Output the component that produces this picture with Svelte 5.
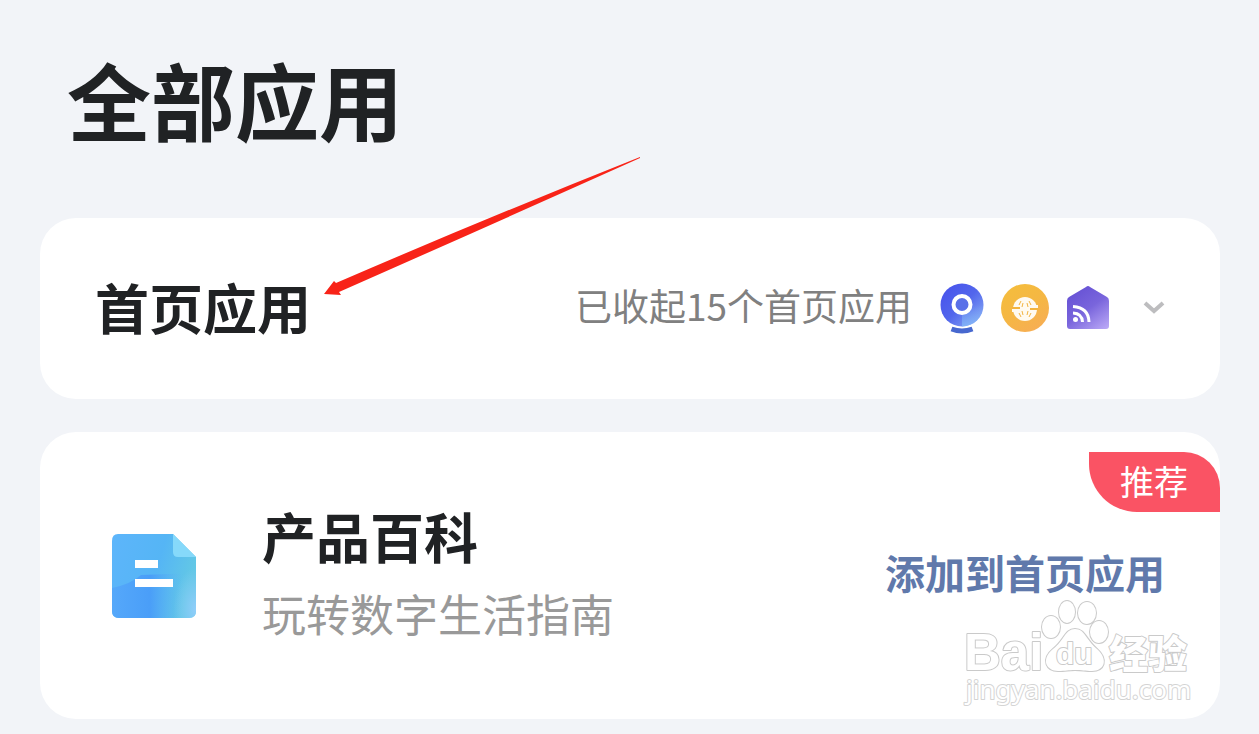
<script>
  let expanded = $state(false);
</script>

<main class="page">
  <h1>全部应用</h1>

  <section class="card home">
    <h2>首页应用</h2>
    <button class="summary" type="button" aria-expanded={expanded} onclick={() => (expanded = !expanded)}>
      <span class="count">已收起15个首页应用</span>
      <span class="icons">
        <svg width="44" height="52" viewBox="1 0 44 52" aria-hidden="true">
          <defs>
            <linearGradient id="cam" x1="0" y1="0" x2="1" y2="1">
              <stop offset="0" stop-color="#4650ec" />
              <stop offset="0.5" stop-color="#5266ec" />
              <stop offset="1" stop-color="#8fb4f6" />
            </linearGradient>
            <linearGradient id="camShade" x1="0" y1="0" x2="0" y2="1">
              <stop offset="0" stop-color="#82b4f8" stop-opacity="0" />
              <stop offset="1" stop-color="#82b8f8" stop-opacity="0.8" />
            </linearGradient>
          </defs>
          <circle cx="23" cy="23" r="21.5" fill="url(#cam)" />
          <path d="M23 23H44.500A21.500 21.500 0 0 1 23 44.500Z" fill="url(#camShade)" />
          <circle cx="23" cy="22.500" r="8.500" fill="#5a70e8" stroke="#fff" stroke-width="4" />
          <path d="M12.500 47Q23 51 33.500 47" fill="none" stroke="#4768cf" stroke-width="5" />
        </svg>
        <svg width="50" height="52" viewBox="0 0 50 52" aria-hidden="true">
          <defs>
            <linearGradient id="globe" x1="0.200" y1="0" x2="0.800" y2="1">
              <stop offset="0" stop-color="#f5bd3c" />
              <stop offset="0.500" stop-color="#f5b744" />
              <stop offset="1" stop-color="#f7ad55" />
            </linearGradient>
          </defs>
          <circle cx="25" cy="26" r="24" fill="url(#globe)" />
          <circle cx="25" cy="27" r="12" fill="#fffaf0" />
          <g fill="none" stroke="#f3b43f" stroke-width="2">
            <path d="M30 27H38M12 26H20" />
            <path d="M21 19L19 23M29 19L31 23M19 31L21 35M31 31L29 35" stroke-width="1" />
            <path d="M23 21L22 25M27 21L28 25M22 29L23 33M28 29L27 33" stroke-width="1" />
          </g>
          <path d="M32 23H38V26H32ZM12 27H18V30H12Z" fill="#fffaf0" />
        </svg>
        <svg width="44" height="52" viewBox="0 0 44 52" aria-hidden="true">
          <defs>
            <linearGradient id="house" x1="0.200" y1="0" x2="0.900" y2="1">
              <stop offset="0" stop-color="#6550d4" />
              <stop offset="0.500" stop-color="#7965dc" />
              <stop offset="1" stop-color="#b7a5f5" />
            </linearGradient>
          </defs>
          <path d="M20 5Q22 3 24 5L41 15Q43 16 43 19V44Q43 47 40 47H4Q1 47 1 44V19Q1 16 3 15Z" fill="url(#house)" />
          <circle cx="9.500" cy="37.500" r="2.500" fill="#fff" />
          <path d="M7 31Q16 31.500 16.500 40M7 24.500Q22.500 25.500 23 40" fill="none" stroke="#fff" stroke-width="3" />
        </svg>
      </span>
      <svg class="chevron" width="22" height="16" viewBox="0 0 22 16" aria-hidden="true">
        <path d="M2 4L11 12L20 4" fill="none" stroke="#bdbdbf" stroke-width="4" />
      </svg>
    </button>
  </section>

  <section class="card product">
    <span class="tag">推荐</span>
    <svg class="doc" width="86" height="86" viewBox="0 0 86 86" aria-hidden="true">
      <defs>
        <linearGradient id="doc" x1="0" y1="0" x2="1" y2="0.300">
          <stop offset="0" stop-color="#5db5fb" />
          <stop offset="0.600" stop-color="#55b5f5" />
          <stop offset="1" stop-color="#62c7e6" />
        </linearGradient>
        <linearGradient id="docBlue" x1="0" y1="0" x2="1" y2="0">
          <stop offset="0" stop-color="#55a8fa" />
          <stop offset="0.450" stop-color="#4a9ef8" />
          <stop offset="0.850" stop-color="#5db8f2" stop-opacity="0" />
        </linearGradient>
        <radialGradient id="docLight" cx="1" cy="0.900" r="0.500">
          <stop offset="0" stop-color="#91cefa" />
          <stop offset="1" stop-color="#8cccf8" stop-opacity="0" />
        </radialGradient>
      </defs>
      <path d="M7 1H62L85 24V78Q85 85 78 85H8Q1 85 1 78V8Q1 1 7 1Z" fill="url(#doc)" />
      <path d="M1 55Q20 51 30 42L85 40V78Q85 85 78 85H8Q1 85 1 78Z" fill="url(#docBlue)" />
      <path d="M62 1L85 24V78Q85 85 78 85H40V24Z" fill="url(#docLight)" />
      <path d="M62 1L85 24H67Q62 24 62 19Z" fill="#86d9fa" />
      <path d="M24 27H47V35H24ZM24 46H62V54H24Z" fill="#fff" />
    </svg>
    <div class="info">
      <h2>产品百科</h2>
      <p>玩转数字生活指南</p>
    </div>
    <button class="add" type="button">添加到首页应用</button>

    <svg class="watermark" width="240" height="116" viewBox="0 0 240 116">
      <g fill="#fff" stroke="#cacaca" stroke-width="2" paint-order="stroke" stroke-linejoin="round">
        <text class="latin" x="4" y="73" font-size="51">Bai</text>
        <ellipse cx="91" cy="30" rx="9" ry="11" />
        <ellipse cx="107" cy="15" rx="8" ry="11" />
        <ellipse cx="127" cy="16" rx="9" ry="11" />
        <ellipse cx="139" cy="35" rx="9" ry="11" />
        <path d="M115 32C105 32 104 44 93 52C80 63 87 74 98 74C106 74 108 73 115 73C122 73 125 74 132 74C144 74 149 63 137 52C126 43 125 32 115 32Z" />
        <text class="latin" x="96" y="67" font-size="30">du</text>
        <text class="han" x="149" y="71" font-size="39">经验</text>
        <text class="url" x="6" y="102" font-size="26">jingyan.baidu.com</text>
      </g>
    </svg>
  </section>

  <svg class="arrow" width="320" height="144" viewBox="0 0 320 144" aria-hidden="true">
    <path d="M316 2Q160 64 12 128L10 126L0 139L17 140L15 137Q160 73 316 3Z" fill="#f82318" />
  </svg>
</main>

<style>
  :global(body) {
    margin: 0;
    background: #f2f4f8;
  }
  .page {
    position: relative;
    padding: 36px 39px 15px 40px;
    font-family: "Noto Sans CJK SC", sans-serif;
    color: #202224;
  }
  h1,
  h2,
  p {
    margin: 0;
  }
  h1 {
    padding-left: 27px;
    font-size: 84px;
    line-height: 126px;
    font-weight: 700;
    margin-bottom: 56px;
  }
  h2 {
    font-size: 54px;
    line-height: 80px;
    font-weight: 700;
    white-space: nowrap;
  }
  .card {
    position: relative;
    display: flex;
    align-items: center;
    box-sizing: border-box;
    padding: 48px 55px 52px;
    border-radius: 36px;
    background: #fff;
  }
  .home {
    justify-content: space-between;
    min-height: 181px;
    margin-bottom: 33px;
  }
  button {
    border: 0;
    padding: 0;
    background: none;
    font-family: inherit;
    white-space: nowrap;
    cursor: pointer;
  }
  .summary {
    display: flex;
    align-items: center;
    color: #808080;
  }
  .count {
    font-size: 37px;
    line-height: 56px;
    padding-bottom: 4px;
    margin-right: 28px;
  }
  .icons {
    display: flex;
    align-items: center;
    gap: 16px;
    margin-right: 33px;
    padding-top: 2px;
  }
  .product {
    min-height: 287px;
    padding-left: 71px;
  }
  .doc {
    flex: none;
    margin-right: 65px;
    margin-top: 4px;
  }
  .info {
    flex: 1;
    padding-bottom: 2px;
  }
  .info p {
    font-size: 44px;
    line-height: 74px;
    color: #999;
    white-space: nowrap;
  }
  .add {
    padding-bottom: 4px;
    font-size: 40px;
    line-height: 60px;
    font-weight: 700;
    color: #6079ab;
  }
  .tag {
    position: absolute;
    top: 20px;
    right: 0;
    padding: 0 32px 2px 31px;
    border-radius: 0 36px 0 48px;
    background: #fa5364;
    color: #fff;
    font-size: 34px;
    line-height: 58px;
  }
  .watermark {
    position: absolute;
    right: 20px;
    bottom: 6px;
    pointer-events: none;
  }
  .latin {
    font-family: "Liberation Sans", sans-serif;
    font-weight: 700;
  }
  .han {
    font-family: "Noto Sans CJK SC", sans-serif;
    font-weight: 900;
  }
  .url {
    font-family: "Noto Sans", sans-serif;
    stroke: #d4d4d4;
  }
  .arrow {
    position: absolute;
    left: 324px;
    top: 155px;
    pointer-events: none;
  }
</style>
